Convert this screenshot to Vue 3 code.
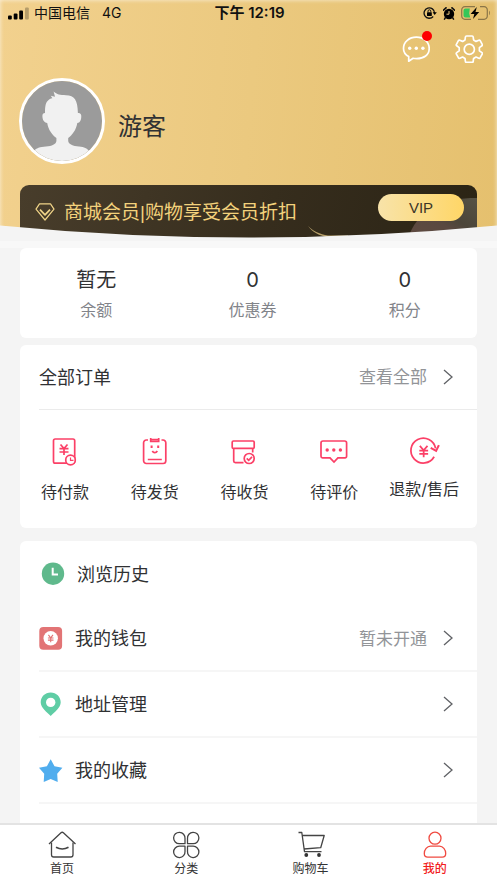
<script setup>
const stats = [
  { value: '暂无', label: '余额' },
  { value: '0', label: '优惠券' },
  { value: '0', label: '积分' },
]
const orders = [
  { id: 'pay', label: '待付款' },
  { id: 'ship', label: '待发货' },
  { id: 'receive', label: '待收货' },
  { id: 'review', label: '待评价' },
  { id: 'refund', label: '退款/售后' },
]
const menu = [
  { id: 'history', label: '浏览历史' },
  { id: 'wallet', label: '我的钱包', note: '暂未开通', arrow: true },
  { id: 'address', label: '地址管理', arrow: true },
  { id: 'favorite', label: '我的收藏', arrow: true },
]
const tabs = [
  { id: 'home', label: '首页' },
  { id: 'category', label: '分类' },
  { id: 'cart', label: '购物车' },
  { id: 'mine', label: '我的', active: true },
]
</script>

<template>
  <div class="page">
    <div class="scroll">
      <header class="hero">
        <div class="status">
          <div class="carrier">
            <svg width="21" height="13" viewBox="0 0 21 13">
              <rect x="0" y="8.5" width="3.8" height="4" rx="1" />
              <rect x="5.7" y="6.5" width="3.8" height="6" rx="1" />
              <rect x="11.2" y="3.5" width="3.8" height="9" rx="1" />
              <rect x="17" y="0.5" width="3.8" height="12" rx="1" opacity=".25" />
            </svg>
            <span>中国电信</span>
            <span class="net">4G</span>
          </div>
          <div class="clock">下午 12:19</div>
          <div class="indicators">
            <svg width="14" height="14" viewBox="0 0 14 14">
              <path d="M11.5 7a5.2 5.2 0 1 0-1.3 3.5" fill="none" stroke="#111" stroke-width="1.3" />
              <path d="M9.6 6.2h4.2l-2.1 2.8z" />
              <rect x="4" y="6.2" width="4.8" height="3.8" rx=".6" />
              <path d="M5 6.4V5.2a1.4 1.4 0 0 1 2.8 0v1.2" fill="none" stroke="#111" stroke-width="1" />
            </svg>
            <svg width="12" height="13" viewBox="0 0 12 13">
              <circle cx="6" cy="7" r="5.2" />
              <path d="M.4 3.2 3 .8M11.6 3.2 9 .8" stroke="#111" stroke-width="1.7" stroke-linecap="round" />
              <path d="m2.5 10.500-1 1.600M9.500 10.500l1 1.600" stroke="#111" stroke-width="1.500" stroke-linecap="round" />
              <path d="M6 4v3.200H3.500" fill="none" stroke="#edc97f" stroke-width="1" />
            </svg>
            <svg width="30" height="14" viewBox="0 0 30 14">
              <path d="M14 .7H4A3.200 3.200 0 0 0 .7 4v6A3.200 3.200 0 0 0 4 13.300h6M17 13.300h6A3.200 3.200 0 0 0 26.300 10V4A3.200 3.200 0 0 0 23 .7h-4" fill="none" stroke="#8b7648" stroke-width="1.200" />
              <path d="M28 4.800c1.200.6 1.200 3.800 0 4.400z" fill="#8b7648" />
              <path d="M4.500 2.500h4.300L8.200 7.500l1 4H4.500a2 2 0 0 1-2-2v-5a2 2 0 0 1 2-2z" fill="#34c759" />
              <path d="M15.800 1 9.600 8h3.700l-1.300 5 6.200-7h-3.700z" />
            </svg>
          </div>
        </div>

        <div class="tools">
          <button type="button" class="tool" aria-label="消息">
            <svg width="28" height="28" viewBox="0 0 28 28" fill="none" stroke="#fff" stroke-width="1.700" stroke-linejoin="round">
              <path d="M6.700 26.200V21.600C3.300 19.700 1.500 16.500 1.500 13.400 1.500 6.800 7.300 2.200 14.400 2.200S27.200 6.800 27.200 13.400s-5.400 10.200-12.500 10.200c-1.300 0-2.400 0-3.600-.3z" />
              <g fill="#fff" stroke="none"><circle cx="7.700" cy="13.200" r="1.700" /><circle cx="14.300" cy="13.200" r="1.700" /><circle cx="20.900" cy="13.200" r="1.700" /></g>
            </svg>
            <i class="dot"></i>
          </button>
          <button type="button" class="tool" aria-label="设置">
            <svg width="28" height="28" viewBox="0 0 28 28" fill="none" stroke="#fff" stroke-width="1.700" stroke-linejoin="round">
              <path d="M11.500 1h5.600q1 0 1.100 1l.4 3 2.400 1.400 2.800-1.200q.9-.3 1.400.5l2 3.600q.5.900-.3 1.500L24.400 12.600v3.200l2.500 1.800q.8.600.3 1.500l-2 3.600q-.5.800-1.400.5L21 22l-2.400 1.400-.4 3q-.1 1-1.100 1h-5.600q-1 0-1.100-1l-.4-3L7.600 22l-2.800 1.200q-.9.300-1.400-.5l-2-3.600q-.5-.9.300-1.500l2.500-1.800v-3.200L1.700 10.800q-.8-.6-.3-1.500l2-3.600q.5-.8 1.400-.5l2.800 1.200L10 5l.4-3q.1-1 1.100-1z" />
              <circle cx="14.300" cy="14.200" r="5.100" />
            </svg>
          </button>
        </div>

        <div class="profile">
          <svg class="avatar" viewBox="0 0 80 80" role="img" aria-label="头像">
            <rect width="80" height="80" fill="#9b9b9b" />
            <path d="M12 80v-10c2-3 6-4 12-4.500 6-.6 10-2 10.400-5.500v-3c-4.500-3.500-8-8-9.200-15-3.200-.4-4.800-3.500-4.800-7 0-2 .8-3 2.600-3 0-7 .6-10.500 3.600-13 1.400-1 2.600-2 3.800-1.700l-1.600-2.500 4.200 1-1.400-5.300c3.400 3 6.400 3.500 12.400 3.700 8.500.2 11.600 4.500 11.900 17.800 2.400-.2 3.500 1 3.400 3.500-.1 3.600-1.200 6.300-4 6.500-1.200 7-4.700 11.500-9.100 15v3c.4 3.500 4.800 4.900 10.800 5.500 5.500.5 8 2 10 4.500v10z" fill="#f1f1f1" />
          </svg>
          <div class="name">游客</div>
        </div>

        <section class="member">
          <svg class="glow" width="180" height="56" viewBox="0 0 180 56">
            <defs>
              <linearGradient id="fold" x1="0" x2="1" y1="1" y2="0">
                <stop offset="0" stop-color="#604b41" />
                <stop offset=".45" stop-color="#594840" />
                <stop offset=".6" stop-color="#4b4539" />
                <stop offset="1" stop-color="#565245" />
              </linearGradient>
            </defs>
            <path d="M110 56c5-16 13-26 27-35 12-6 26-8 43-8v43z" fill="url(#fold)" />
            <path d="M11 41c5 5 12 8.500 20 9.500h20v2H32c-10-1.500-17-6-21-11.500z" fill="#b7a06a" />
          </svg>
          <svg class="gem" width="20" height="18" viewBox="0 0 20 18" fill="none" stroke="#f0d488" stroke-linejoin="round">
            <path d="M4.500.8h11L19 6.200 10 17 1 6.200z" stroke-width="1.200" />
            <path d="m5 6.600 5 5.200 5-5.200" stroke-width="1.700" />
          </svg>
          <span class="pitch">商城会员|购物享受会员折扣</span>
          <button type="button" class="vip">VIP</button>
        </section>

        <svg class="curve" viewBox="0 0 500 16" preserveAspectRatio="none">
          <path d="M0 .500Q250 24.500 500 .500V16H0z" fill="#f4f4f4" />
        </svg>
      </header>

      <main class="content">
        <section class="card stats">
          <div v-for="s in stats" :key="s.label" class="stat">
            <div class="value">{{ s.value }}</div>
            <div class="caption">{{ s.label }}</div>
          </div>
        </section>

        <section class="card orders">
          <div class="orders-head">
            <h2>全部订单</h2>
            <a href="#" class="more">
              <span>查看全部</span>
              <svg class="arrow" viewBox="0 0 10 16"><path d="m1 1 8 7-8 7" /></svg>
            </a>
          </div>
          <div class="order-grid">
            <a v-for="o in orders" :key="o.id" href="#" class="order" :class="o.id">
              <svg v-if="o.id === 'pay'" viewBox="0 0 32 32">
                <rect x="4.500" y="4" width="21.200" height="24.200" rx="1.700" />
                <path d="m11.500 9.500 3.500 4 3.500-4M10.500 13.700h9M10.500 17h9M15 13.500v6.500" />
                <circle cx="21.500" cy="25" r="4.800" fill="#fff" />
                <path d="M21.500 22.500v2.800h3" stroke-width="1.200" />
              </svg>
              <svg v-else-if="o.id === 'ship'" viewBox="0 0 32 32">
                <path d="M9 5H7.300a2.700 2.700 0 0 0-2.700 2.700v18.100a2.700 2.700 0 0 0 2.700 2.700h16.800a2.700 2.700 0 0 0 2.700-2.700V7.700A2.700 2.700 0 0 0 24.100 5h-1.600" />
                <path d="M11.700 3v4.300M19.700 3v4.300M11.700 4.500h8M11.700 6.300h8M8.800 24.500h14M13.300 16c1.200 2.200 3.800 2.200 5 0" />
                <path d="M12.600 10.500v2.400M19.200 10.500v2.400" stroke-width="2" />
              </svg>
              <svg v-else-if="o.id === 'receive'" viewBox="0 0 32 32">
                <rect x="4.200" y="6" width="22" height="7.400" rx="1.200" />
                <path d="M5.700 13.400v12.600A1.600 1.600 0 0 0 7.300 27.600H15.500M24.700 13.400v4.100" />
                <circle cx="21.200" cy="23.500" r="5" />
                <path d="m18.700 23.300 2 2 3.300-3.400" />
              </svg>
              <svg v-else-if="o.id === 'review'" viewBox="0 0 32 32">
                <path d="M5 6h21.600a2 2 0 0 1 2 2v13.300a1.500 1.500 0 0 1-1.500 1.500h-7.200L16 27l-4-4.200H4.500A1.500 1.500 0 0 1 3 21.300V8a2 2 0 0 1 2-2z" />
                <g fill="#fb4067" stroke="none"><circle cx="9.200" cy="15" r="1.700" /><circle cx="15.800" cy="15" r="1.700" /><circle cx="22.400" cy="15" r="1.700" /></g>
              </svg>
              <svg v-else viewBox="0 0 28 28">
                <path d="M23.300 21A12 12 0 1 1 24.700 13" />
                <path d="m20 12.500 5.200 2.800 2.700-5.500" stroke-width="2" />
                <path d="m9.500 10.500 3.700 4.200 3.700-4.200M9 15h8.500M9 18.300h8.500M13.200 14.500v7" />
              </svg>
              <span>{{ o.label }}</span>
            </a>
          </div>
        </section>

        <nav class="card menu">
          <a v-for="m in menu" :key="m.id" href="#" class="row" :class="m.id">
            <svg v-if="m.id === 'history'" class="icon" viewBox="0 0 24 24">
              <circle cx="12" cy="11.700" r="11.200" fill="#5fb98c" />
              <path d="M11.700 5.700v6.800H17" fill="none" stroke="#fff" stroke-width="2" />
            </svg>
            <svg v-else-if="m.id === 'wallet'" class="icon" viewBox="0 0 24 24">
              <rect x=".3" y="1" width="22.800" height="22.800" rx="4" fill="#e27475" />
              <circle cx="11.700" cy="12.300" r="7.200" fill="#fff" />
              <path d="m9.400 8.800 2.300 3 2.300-3M8.900 12h5.600M8.900 14.100h5.600M11.700 11.800v4.500" fill="none" stroke="#e27475" stroke-width="1.100" />
            </svg>
            <svg v-else-if="m.id === 'address'" class="icon" viewBox="0 0 24 24">
              <path d="M11.700.6C17.400.6 21.700 4.900 21.700 10.300c0 5.500-6.300 10.200-10 13.700-3.700-3.500-10-8.200-10-13.700C1.700 4.900 6 .6 11.700.6z" fill="#5fcda5" />
              <circle cx="11.700" cy="10.400" r="4.700" fill="#fff" />
            </svg>
            <svg v-else class="icon" viewBox="0 0 24 24">
              <path d="m11.700 1.200 3.800 7.100 7.900 1.500-5.200 5.900.5 8.200-7-2.800-7 2.800.5-8.200L0 9.800l7.900-1.500z" fill="#50adee" />
            </svg>
            <span class="label">{{ m.label }}</span>
            <span v-if="m.note" class="note">{{ m.note }}</span>
            <svg v-if="m.arrow" class="arrow" viewBox="0 0 10 16"><path d="m1 1 8 7-8 7" /></svg>
          </a>
        </nav>
      </main>
    </div>

    <nav class="tabbar">
      <a v-for="t in tabs" :key="t.id" href="#" class="tab" :class="{ active: t.active }">
        <svg v-if="t.id === 'home'" viewBox="0 0 28 28">
          <path d="M3.500 11.500v12.300A2.200 2.200 0 0 0 5.700 26h17.100a2.200 2.200 0 0 0 2.200-2.200V11.500" />
          <path d="m1 13 12-11.200c.8-.7 1.600-.7 2.400 0L27.500 13" />
          <path d="M8 16.300c3.700 2 8.800 2 12.500 0" stroke-width="1.700" />
        </svg>
        <svg v-else-if="t.id === 'category'" viewBox="0 0 28 28">
          <path d="M13 12.700V7.400a5.700 5.700 0 1 0-5.700 5.300zM15.500 12.700V7.400a5.700 5.700 0 1 1 5.700 5.300zM13 15.200v5.300a5.700 5.700 0 1 1-5.700-5.300zM15.500 15.200v5.300a5.700 5.700 0 1 0 5.700-5.300z" />
        </svg>
        <svg v-else-if="t.id === 'cart'" viewBox="0 0 28 28">
          <path d="M1.500 1.500h3.300l2.700 19.200h17M5.200 4.500h22l-3.500 12.200L7 18" />
          <g fill="#333" stroke="none"><circle cx="9.300" cy="24" r="1.900" /><circle cx="22" cy="24" r="1.900" /></g>
        </svg>
        <svg v-else viewBox="0 0 28 28">
          <circle cx="14" cy="7.200" r="6" />
          <path d="M9.500 15.200h9c3.500 0 6.200 3.600 6.200 7.300 0 2.500-1.200 3.700-3.400 3.700H6.700c-2.200 0-3.400-1.200-3.400-3.700 0-3.700 2.700-7.300 6.200-7.300z" />
        </svg>
        <span>{{ t.label }}</span>
      </a>
    </nav>
  </div>
</template>

<style>
body {
  margin: 0;
  background: #f4f4f4;
}
</style>

<style scoped>
.page {
  display: flex;
  flex-direction: column;
  height: 100vh;
  color: #303133;
  font-family: Inter, "Noto Sans CJK SC", sans-serif;
}
a {
  color: inherit;
  text-decoration: none;
}
button {
  padding: 0;
  border: 0;
  background: none;
  font-family: inherit;
  cursor: pointer;
}
svg {
  display: block;
  flex: none;
}
.scroll {
  flex: 1;
  min-height: 0;
  display: flex;
  flex-direction: column;
  overflow-y: auto;
  scrollbar-width: none;
}
.hero {
  position: relative;
  flex: none;
  padding-bottom: 1px;
  background: linear-gradient(95deg, #f2d18e, #ebc97f 50%, #e5c06e);
  box-shadow: inset 0 0 4px rgba(255, 255, 255, 0.7);
}
.status {
  display: grid;
  grid-template-columns: 1fr auto 1fr;
  align-items: center;
  height: 26px;
  padding: 0 6px 0 8px;
  color: #111;
  font-size: 14px;
  line-height: 24px;
}
.carrier {
  display: flex;
  align-items: center;
  gap: 5px;
}
.net {
  margin-left: 7px;
}
.clock {
  font-size: 15px;
  font-weight: 600;
}
.indicators {
  display: flex;
  align-items: center;
  justify-content: flex-end;
  gap: 6px;
}
.tools {
  display: flex;
  align-items: center;
  justify-content: flex-end;
  gap: 25px;
  height: 46px;
  padding-right: 14px;
}
.tool {
  position: relative;
}
.dot {
  position: absolute;
  top: -4px;
  right: -2px;
  width: 10px;
  height: 10px;
  border-radius: 50%;
  background: #fe0000;
}
.profile {
  display: flex;
  align-items: center;
  gap: 13px;
  padding: 6px 20px 21px 19px;
}
.avatar {
  width: 80px;
  height: 80px;
  border: 3px solid #fff;
  border-radius: 50%;
}
.name {
  padding-top: 12px;
  font-size: 24px;
  line-height: 36px;
}
.member {
  position: relative;
  display: flex;
  align-items: flex-start;
  height: 55px;
  margin: 0 20px;
  padding: 0 13px 0 15px;
  box-sizing: border-box;
  border-radius: 9px 9px 0 0;
  overflow: hidden;
  background: linear-gradient(100deg, #483d2b, #362d1d 55%, #2b2415);
}
.glow {
  position: absolute;
  top: 0;
  right: 0;
}
.gem {
  margin-top: 18px;
}
.pitch {
  flex: 1;
  margin: 14px 0 0 9px;
  color: #f3d27c;
  font-family: "Liberation Sans", "Noto Sans CJK SC", sans-serif;
  font-size: 19px;
  line-height: 28px;
  white-space: nowrap;
}
.vip {
  position: relative;
  width: 86px;
  height: 27px;
  margin-top: 9px;
  border-radius: 14px;
  background: linear-gradient(90deg, #f8e3a9, #ffd667);
  color: #3c3527;
  font-family: "Liberation Sans", sans-serif;
  font-size: 15px;
}
.curve {
  position: absolute;
  left: 0;
  bottom: 0;
  width: 100%;
  height: 16px;
}
.content {
  flex: 1 0 auto;
  display: flex;
  flex-direction: column;
  padding: 0 20px;
  border-top: 7px solid #f8f8f8;
}
.card {
  border-radius: 6px;
  background: #fff;
}
.stats {
  display: flex;
  justify-content: space-around;
  padding: 16px 0;
}
.stat {
  text-align: center;
}
.value {
  font-size: 20px;
  line-height: 32px;
}
.caption {
  margin-top: 2px;
  color: #82848a;
  font-size: 16px;
  line-height: 24px;
}
.orders {
  margin-top: 7px;
}
.orders-head {
  display: flex;
  align-items: center;
  justify-content: space-between;
  height: 64px;
  margin-left: 19px;
  padding-right: 24px;
  border-bottom: 1px solid #ebebeb;
}
h2 {
  margin: 0;
  padding-top: 2px;
  font-size: 18px;
  font-weight: 400;
  line-height: 28px;
}
.more {
  display: flex;
  align-items: center;
  gap: 16px;
  color: #929498;
  font-size: 17px;
  line-height: 24px;
}
.arrow {
  width: 10px;
  height: 16px;
  fill: none;
  stroke: #606266;
  stroke-width: 1.3;
}
.order-grid {
  display: grid;
  grid-template-columns: repeat(5, 1fr);
  padding: 25px 8px 24px 0;
}
.order {
  display: flex;
  flex-direction: column;
  align-items: center;
  gap: 13px;
  font-size: 16px;
  line-height: 24px;
  white-space: nowrap;
}
.order svg {
  width: 32px;
  height: 32px;
  fill: none;
  stroke: #fb4067;
  stroke-width: 1.7;
  overflow: visible;
}
.order.refund svg {
  width: 29px;
  height: 29px;
}
.menu {
  flex: 1;
  margin-top: 13px;
  padding-bottom: 19px;
  border-radius: 6px 6px 0 0;
}
.row {
  display: flex;
  align-items: center;
  height: 64px;
  margin-left: 19px;
  padding-right: 24px;
  border-bottom: 2px solid #f6f6f6;
  font-size: 18px;
  line-height: 28px;
}
.row.history {
  height: 65px;
  padding-left: 2px;
  border-bottom: 0;
}
.icon {
  width: 24px;
  height: 24px;
}
.label {
  flex: 1;
  margin-left: 12px;
  padding-top: 2px;
}
.note {
  margin-right: 16px;
  padding-top: 2px;
  color: #929498;
  font-size: 17px;
}
.tabbar {
  flex: none;
  display: grid;
  grid-template-columns: repeat(4, 1fr);
  padding: 6px 0;
  border-top: 2px solid #e3e3e3;
  background: #fff;
}
.tab {
  display: flex;
  flex-direction: column;
  align-items: center;
  gap: 2px;
  color: #333;
  font-size: 12px;
  line-height: 16px;
}
.tab svg {
  width: 28px;
  height: 28px;
  fill: none;
  stroke: #444;
  stroke-width: 1.3;
  stroke-linejoin: round;
}
.tab.active {
  color: #f21d1d;
  font-weight: 500;
}
.tab.active svg {
  stroke: #f04a40;
}
</style>
